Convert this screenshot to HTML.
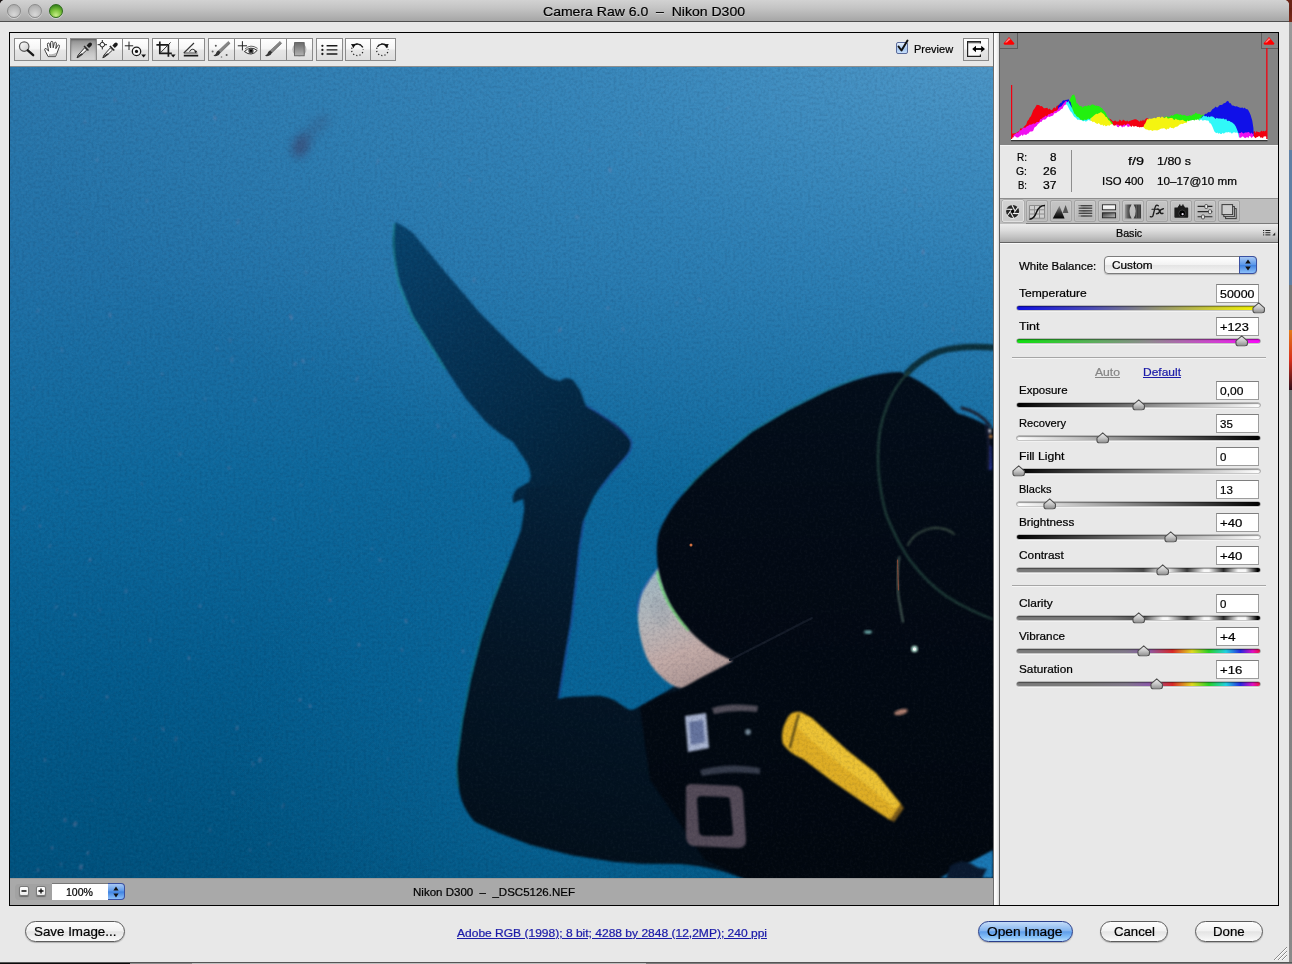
<!DOCTYPE html>
<html>
<head>
<meta charset="utf-8">
<title>Camera Raw 6.0 - Nikon D300</title>
<style>
*{box-sizing:border-box;margin:0;padding:0}
html,body{width:1292px;height:964px;overflow:hidden}
body{background:#6f6f6f;font-family:"Liberation Sans",sans-serif;font-size:11px;color:#000;position:relative}
.abs{position:absolute}
#t_title{text-shadow:0 1px 0 rgba(255,255,255,.45)}
.t{-webkit-text-stroke:.22px currentColor;position:absolute;white-space:pre;display:block;transform-origin:0 50%}
#bgstrip{left:1289px;top:0;width:3px;height:964px;background:linear-gradient(#5a1a10 0,#7a2a18 22px,#9a9a9a 22px,#8c8c8c 150px,#5f7fa3 150px,#5f7fa3 285px,#777 285px,#777 330px,#e07a18 330px,#d8301c 360px,#30101c 390px,#777 390px,#8a8a8a 964px)}
#bgbottom{left:0;top:962px;width:1292px;height:2px;background:linear-gradient(#555 0,#555 1px,transparent 1px),linear-gradient(90deg,#0c0c0c 0,#0c0c0c 130px,#8c8c8c 130px,#8c8c8c 192px,#bdbdbd 192px,#bdbdbd 646px,#7c7c7c 646px,#7c7c7c 100%)}
#win{left:0;top:0;width:1289px;height:962px;background:#e8e8e8;border-radius:5px 5px 0 0;overflow:hidden}
#title{left:0;top:0;width:1289px;height:22px;background:linear-gradient(#d2d2d2 0,#c4c4c4 8px,#a6a6a6 21px,#a0a0a0 100%);border-bottom:1px solid #4f4f4f}
.tl{top:4px;width:14px;height:14px;border-radius:50%;border:1px solid #8c8c8c;background:radial-gradient(circle at 50% 80%,#d8d8d8 0,#bcbcbc 55%,#a2a2a2 100%);box-shadow:0 1px 0 rgba(255,255,255,.45)}
#frame{left:9px;top:32px;width:1270px;height:874px;border:1px solid #000;pointer-events:none}
/*TEXTCSS*/
</style>
</head>
<body>
<div id="bgstrip" class="abs"></div>
<div id="bgbottom" class="abs"></div>
<div class="abs" style="left:0;top:0;width:8px;height:8px;background:#1a1414"></div><div class="abs" style="left:1280px;top:0;width:12px;height:8px;background:#6a2416"></div>
<div id="win" class="abs">
<div id="title" class="abs"></div>
<div class="abs tl" style="left:7px"></div>
<div class="abs tl" style="left:28px"></div>
<div class="abs tl" style="left:49px;border-color:#2f6a1c;background:radial-gradient(circle at 50% 85%,#c8ee88 0,#7cc23c 45%,#3f8a1e 80%,#2c6c14 100%)"></div>
<style>
#tbar{left:10px;top:33px;width:983px;height:33px;background:#e8e8e8}
#tline{left:10px;top:66px;width:983px;height:1px;background:#8e8e8e}
#photo{left:10px;top:67px;width:983px;height:811px;background:#1f6ea6;overflow:hidden}
#status{left:10px;top:878px;width:983px;height:27px;background:#a9a9a9;border-top:1px solid #9a9a9a}
#split{left:993px;top:33px;width:7px;height:872px;background:linear-gradient(90deg,#6e6e6e 0,#6e6e6e 1px,#ffffff 1px,#f4f4f4 4px,#d8d8d8 6px,#5e5e5e 6px,#5e5e5e 7px)}
.tb{position:absolute;top:38px;width:27px;height:23px;border:1px solid #8a8a8a;background:linear-gradient(#ffffff 0,#f6f6f6 45%,#e6e6e6 55%,#dedede 100%)}
.tb.sel{background:linear-gradient(#8a8a8a 0,#a8a8a8 30%,#c8c8c8 70%,#d4d4d4 100%);box-shadow:inset 0 1px 2px rgba(0,0,0,.35)}
</style>
<div id="tbar" class="abs"></div>
<div id="tline" class="abs"></div>
<div class="tb" style="left:14px"></div><div class="tb" style="left:40px"></div>
<div class="tb sel" style="left:70px"></div><div class="tb" style="left:96px"></div><div class="tb" style="left:122px"></div>
<div class="tb" style="left:152px"></div><div class="tb" style="left:178px"></div>
<div class="tb" style="left:208px"></div><div class="tb" style="left:234px"></div><div class="tb" style="left:260px"></div><div class="tb" style="left:286px"></div>
<div class="tb" style="left:316px"></div>
<div class="tb" style="left:345px;width:26px"></div><div class="tb" style="left:370px;width:26px"></div>
<div class="tb" style="left:963px;width:26px"></div>
<svg class="abs" style="left:0;top:33px" width="1000" height="33" viewBox="0 33 1000 33">
<defs>
<linearGradient id="lens" x1="0" y1="0" x2="1" y2="1"><stop offset="0" stop-color="#ffffff"/><stop offset="1" stop-color="#c8c8c8"/></linearGradient>
<linearGradient id="gradf" x1="0" y1="0" x2="0" y2="1"><stop offset="0" stop-color="#6a6a6a"/><stop offset="1" stop-color="#b4b4b4"/></linearGradient>
<linearGradient id="brush" x1="0" y1="0" x2="1" y2="1"><stop offset="0" stop-color="#b0b0b0"/><stop offset="1" stop-color="#5a5a5a"/></linearGradient>
</defs>
<!-- 1 zoom -->
<circle cx="24.2" cy="46.6" r="4.7" fill="url(#lens)" stroke="#5a5a5a" stroke-width="1.2"/>
<path d="M27.8 50.3 L33.2 55.2" stroke="#1a1a1a" stroke-width="2.3" stroke-linecap="round"/>
<!-- 2 hand -->
<path d="M48.2 56.6 L45.3 51.2 Q44 49 45.2 48.5 Q46.4 48.2 47.6 50 L48.6 51.2 L47.4 44.6 Q47.2 43.2 48.2 43 Q49.2 42.9 49.6 44.2 L50.6 48 L50.6 42.6 Q50.7 41.4 51.8 41.4 Q52.8 41.4 52.9 42.6 L53.2 47.8 L54.3 43.2 Q54.6 42.1 55.6 42.3 Q56.5 42.6 56.4 43.8 L55.8 48.6 L57.6 45.6 Q58.3 44.7 59.1 45.1 Q59.8 45.6 59.4 46.7 L57.4 52 Q56.6 54.6 55.4 56.6 Z" fill="#fcfcfc" stroke="#3c3c3c" stroke-width="1" stroke-linejoin="round"/>
<path d="M49 56.2 L55 56.2 L56.6 52.6 Q53 55 49 54 Z" fill="#b8b8b8"/>
<!-- 3 eyedropper (selected) -->
<g id="eyed">
<path d="M86.6 45.4 L88.9 43 Q90.2 41.8 91.5 43.1 Q92.6 44.4 91.4 45.7 L89 48 Z" fill="#1c1c1c"/>
<path d="M84.6 45.6 L89 50 L87.9 51 L83.5 46.6 Z" fill="#2a2a2a"/>
<path d="M84.6 47.8 L86.8 50 L79.6 56.6 L77 57.8 L78.2 55 Z" fill="#f4f4f4" stroke="#222" stroke-width=".9" stroke-linejoin="round"/>
<path d="M81.6 53.2 L83 54.4 L79.4 56.6 L77.4 57.4 L78.4 55.6 Z" fill="#333"/>
</g>
<!-- 4 color sampler -->
<use href="#eyed" x="25.8" y="0"/>
<circle cx="102.3" cy="44.7" r="2.3" fill="none" stroke="#222" stroke-width="1"/>
<path d="M102.3 40 V42.6 M102.3 46.8 V49.4 M97.6 44.7 H100.2 M104.4 44.7 H107" stroke="#222" stroke-width="1"/>
<!-- 5 targeted adjustment -->
<path d="M129 41.6 V50 M124.8 45.8 H133.2" stroke="#222" stroke-width="1"/>
<circle cx="136.5" cy="51.4" r="4.2" fill="#f8f8f8" stroke="#1c1c1c" stroke-width="1.3"/>
<circle cx="136.5" cy="51.4" r="1.6" fill="#111"/>
<path d="M141.2 54.6 L146 54.6 L143.6 57.4 Z" fill="#111"/>
<!-- 6 crop -->
<path d="M159.8 41.4 V53.4 H171.8 M156.4 44.8 H168.4 V56.8" stroke="#1a1a1a" stroke-width="1.7" fill="none"/>
<path d="M160.6 52.6 L170.6 42.4" stroke="#333" stroke-width="1"/>
<path d="M170.8 54.6 L175.6 54.6 L173.2 57.4 Z" fill="#111"/>
<!-- 7 straighten -->
<path d="M183.8 55.6 H198.2" stroke="#1a1a1a" stroke-width="1.6"/>
<path d="M183.8 53 H197.4" stroke="#444" stroke-width="1"/>
<path d="M183.8 53 L194 43" stroke="#333" stroke-width="1.1"/>
<path d="M189.6 51.8 Q190.4 49.2 192.8 49.2 Q195 49.4 195.6 51.4" stroke="#333" stroke-width="1" fill="none"/>
<path d="M194 50.6 L197.2 51 L195.6 53.2 Z" fill="#222"/>
<!-- 8 spot removal -->
<g id="brsh">
<path d="M228.4 41.4 L230 43.4 L220.6 52.6 L218.6 50.6 Z" fill="url(#brush)" stroke="#555" stroke-width=".5"/>
<path d="M218.6 50.6 L220.6 52.6 Q219.6 55.2 216.6 56 Q214.4 56.4 213.4 55.8 Q216.2 54.6 216.6 52 Q217.4 51 218.6 50.6 Z" fill="#333"/>
</g>
<circle cx="215.8" cy="45.8" r="1" fill="#555"/><circle cx="212.6" cy="51.4" r="1" fill="#666"/><circle cx="226.6" cy="55" r="1" fill="#555"/><circle cx="221.5" cy="57" r=".8" fill="#777"/>
<!-- 9 red eye -->
<path d="M242.4 41.2 V50.4 M237.8 45.8 H247" stroke="#222" stroke-width="1"/>
<path d="M244.4 51.6 Q250.6 45.4 257.2 50.4 Q251.6 57 244.4 51.6 Z" fill="#f4f4f4" stroke="#333" stroke-width="1"/>
<circle cx="251" cy="50.8" r="2.6" fill="#444"/><circle cx="251" cy="50.8" r="1.1" fill="#000"/>
<path d="M245 49 Q250.6 43.6 257.6 48.4" stroke="#555" stroke-width=".9" fill="none"/>
<!-- 10 adjustment brush -->
<use href="#brsh" x="51.6" y="0"/>
<!-- 11 graduated filter -->
<circle cx="299.4" cy="49.3" r="6.6" fill="#c9c9c9" stroke="#9a9a9a" stroke-width=".6"/>
<rect x="294.6" y="42.6" width="9.6" height="13.2" fill="url(#gradf)" stroke="#555" stroke-width=".8"/>
<!-- 12 prefs list -->
<path d="M326.6 45.8 H337.4 M326.6 49.9 H337.4 M326.6 54 H337.4" stroke="#1a1a1a" stroke-width="1.4"/>
<circle cx="322.4" cy="45.8" r="1.15" fill="#1a1a1a"/><circle cx="322.4" cy="49.9" r="1.15" fill="#1a1a1a"/><circle cx="322.4" cy="54" r="1.15" fill="#1a1a1a"/>
<!-- 13 rotate ccw -->
<circle cx="357.4" cy="49.8" r="5.8" fill="none" stroke="#222" stroke-width="1.25" stroke-dasharray="1.2 2.1" stroke-dashoffset="1"/>
<path d="M362.4 46.9 A5.8 5.8 0 0 0 353.2 45.8" stroke="#1a1a1a" stroke-width="1.3" fill="none"/>
<path d="M351 44 L355.6 44.2 L353.4 48.2 Z" fill="#111"/>
<!-- 14 rotate cw -->
<circle cx="382.4" cy="49.8" r="5.8" fill="none" stroke="#222" stroke-width="1.25" stroke-dasharray="1.2 2.1" stroke-dashoffset="1"/>
<path d="M377.4 46.9 A5.8 5.8 0 0 1 386.6 45.8" stroke="#1a1a1a" stroke-width="1.3" fill="none"/>
<path d="M388.8 44 L384.2 44.2 L386.4 48.2 Z" fill="#111"/>
<!-- toggle fullscreen -->
<path d="M980.4 43.4 V41.6 H967.6 V56.4 H980.4 V54.4" stroke="#222" stroke-width="1.2" fill="#fafafa"/>
<path d="M968 42.6 H980" stroke="#666" stroke-width="1.4"/>
<path d="M974.6 49 H982.6" stroke="#000" stroke-width="1.8"/>
<path d="M972.2 49 L976 45.8 V52.2 Z M985 49 L981.2 45.8 V52.2 Z" fill="#000"/>
</svg>

<div id="photo" class="abs">
<svg class="abs" style="left:0;top:0" width="983" height="811" viewBox="10 67 983 811">
<defs>
<linearGradient id="wv" x1="0" y1="67" x2="0" y2="878" gradientUnits="userSpaceOnUse">
<stop offset="0" stop-color="#2c79ad"/><stop offset=".25" stop-color="#2172a8"/><stop offset=".5" stop-color="#0e699d"/><stop offset=".75" stop-color="#045e90"/><stop offset="1" stop-color="#005480"/>
</linearGradient>
<radialGradient id="wr" cx="0" cy="0" r="1" gradientUnits="userSpaceOnUse" gradientTransform="translate(1000 40) scale(1000 480)">
<stop offset="0" stop-color="#6cb2de" stop-opacity=".56"/><stop offset=".5" stop-color="#50a8dc" stop-opacity=".25"/><stop offset="1" stop-color="#50a8dc" stop-opacity="0"/>
</radialGradient>
<radialGradient id="wl" cx="60" cy="920" r="420" gradientUnits="userSpaceOnUse">
<stop offset="0" stop-color="#004a74" stop-opacity=".2"/><stop offset="1" stop-color="#004a74" stop-opacity="0"/>
</radialGradient>
<radialGradient id="wm" cx="560" cy="780" r="330" gradientUnits="userSpaceOnUse">
<stop offset="0" stop-color="#1478b0" stop-opacity=".35"/><stop offset="1" stop-color="#1478b0" stop-opacity="0"/>
</radialGradient>
<linearGradient id="fing" x1="395" y1="222" x2="600" y2="480" gradientUnits="userSpaceOnUse">
<stop offset="0" stop-color="#08446e"/><stop offset=".4" stop-color="#063558"/><stop offset=".85" stop-color="#042640"/><stop offset="1" stop-color="#042138"/>
</linearGradient>
<linearGradient id="legg" x1="600" y1="460" x2="520" y2="860" gradientUnits="userSpaceOnUse">
<stop offset="0" stop-color="#04253e"/><stop offset=".2" stop-color="#041e34"/><stop offset=".5" stop-color="#041626"/><stop offset="1" stop-color="#030f1a"/>
</linearGradient>
<linearGradient id="bodyg" x1="0" y1="372" x2="0" y2="880" gradientUnits="userSpaceOnUse"><stop offset="0" stop-color="#030e1a"/><stop offset=".4" stop-color="#030a14"/><stop offset="1" stop-color="#02080f"/></linearGradient>
<linearGradient id="bagg" x1="652" y1="572" x2="695" y2="688" gradientUnits="userSpaceOnUse"><stop offset="0" stop-color="#9fb8c2"/><stop offset=".35" stop-color="#b4b7bb"/><stop offset=".7" stop-color="#c3aba7"/><stop offset="1" stop-color="#aa9492"/></linearGradient>
<filter id="b1" x="-5%" y="-5%" width="110%" height="110%" color-interpolation-filters="sRGB"><feGaussianBlur stdDeviation="1.3"/></filter>
<filter id="b2" x="-20%" y="-20%" width="140%" height="140%" color-interpolation-filters="sRGB"><feGaussianBlur stdDeviation="0.8"/></filter>
<filter id="b6" filterUnits="userSpaceOnUse" x="250" y="80" width="120" height="120" color-interpolation-filters="sRGB"><feGaussianBlur stdDeviation="5"/></filter>
<filter id="grain" x="0" y="0" width="100%" height="100%" color-interpolation-filters="sRGB"><feTurbulence type="fractalNoise" baseFrequency="0.38" numOctaves="2" seed="3" result="n"/><feColorMatrix type="matrix" values="0 0 0 0 1  0 0 0 0 1  0 0 0 0 1  .9 0 0 0 -.36"/></filter>
<filter id="grain2" x="0" y="0" width="100%" height="100%" color-interpolation-filters="sRGB"><feTurbulence type="fractalNoise" baseFrequency="0.36" numOctaves="2" seed="11" result="n"/><feColorMatrix type="matrix" values="0 0 0 0 0  0 0 0 0 0  0 0 0 0 0.1  .9 0 0 0 -.36"/></filter>
</defs>
<rect x="10" y="67" width="983" height="811" fill="url(#wv)"/>
<rect x="10" y="67" width="983" height="811" fill="url(#wr)"/>
<rect x="10" y="67" width="983" height="811" fill="url(#wl)"/>
<rect x="10" y="67" width="983" height="811" fill="url(#wm)"/>
<path d="M298 150 Q304 136 324 120" stroke="#3a4f78" stroke-width="12" stroke-linecap="round" fill="none" filter="url(#b6)" opacity=".3"/>
<ellipse cx="301" cy="146" rx="8" ry="12" transform="rotate(20 301 146)" fill="#3c3e68" filter="url(#b6)" opacity=".5"/>
<g filter="url(#b2)"><ellipse cx="24" cy="508" rx="1.2" ry="2.9" transform="rotate(25 24 508)" fill="#a98cb4" opacity="0.28"/><ellipse cx="126" cy="591" rx="1.7" ry="2.3" transform="rotate(10 126 591)" fill="#a98cb4" opacity="0.22"/><ellipse cx="222" cy="534" rx="1.2" ry="1.4" transform="rotate(-10 222 534)" fill="#a98cb4" opacity="0.22"/><ellipse cx="107" cy="697" rx="1.2" ry="1.9" transform="rotate(-20 107 697)" fill="#a98cb4" opacity="0.36"/><ellipse cx="135" cy="739" rx="1.2" ry="2.3" transform="rotate(0 135 739)" fill="#a98cb4" opacity="0.18"/><ellipse cx="176" cy="739" rx="1.2" ry="2.9" transform="rotate(25 176 739)" fill="#a98cb4" opacity="0.28"/><ellipse cx="41" cy="697" rx="1.3" ry="1.9" transform="rotate(25 41 697)" fill="#a98cb4" opacity="0.18"/><ellipse cx="81" cy="867" rx="1.7" ry="2.9" transform="rotate(10 81 867)" fill="#a98cb4" opacity="0.36"/><ellipse cx="359" cy="645" rx="1.7" ry="1.4" transform="rotate(10 359 645)" fill="#a98cb4" opacity="0.36"/><ellipse cx="226" cy="617" rx="1.0" ry="1.9" transform="rotate(-20 226 617)" fill="#a98cb4" opacity="0.22"/><ellipse cx="233" cy="793" rx="1.7" ry="1.9" transform="rotate(-20 233 793)" fill="#a98cb4" opacity="0.28"/><ellipse cx="57" cy="490" rx="1.0" ry="1.4" transform="rotate(-20 57 490)" fill="#a98cb4" opacity="0.22"/><ellipse cx="100" cy="610" rx="1.0" ry="2.3" transform="rotate(25 100 610)" fill="#a98cb4" opacity="0.18"/><ellipse cx="150" cy="640" rx="1.0" ry="1.9" transform="rotate(25 150 640)" fill="#a98cb4" opacity="0.36"/><ellipse cx="45" cy="760" rx="1.2" ry="2.3" transform="rotate(0 45 760)" fill="#a98cb4" opacity="0.28"/><ellipse cx="300" cy="700" rx="1.7" ry="1.4" transform="rotate(-20 300 700)" fill="#a98cb4" opacity="0.36"/><ellipse cx="260" cy="760" rx="1.7" ry="2.9" transform="rotate(10 260 760)" fill="#a98cb4" opacity="0.28"/><ellipse cx="250" cy="850" rx="1.0" ry="1.9" transform="rotate(-20 250 850)" fill="#a98cb4" opacity="0.28"/><ellipse cx="210" cy="830" rx="1.3" ry="2.9" transform="rotate(-10 210 830)" fill="#a98cb4" opacity="0.18"/><ellipse cx="150" cy="800" rx="1.2" ry="2.3" transform="rotate(-10 150 800)" fill="#a98cb4" opacity="0.18"/><ellipse cx="420" cy="700" rx="1.3" ry="1.4" transform="rotate(0 420 700)" fill="#a98cb4" opacity="0.28"/><ellipse cx="380" cy="560" rx="1.2" ry="2.3" transform="rotate(-10 380 560)" fill="#a98cb4" opacity="0.28"/><ellipse cx="330" cy="600" rx="1.2" ry="1.9" transform="rotate(-10 330 600)" fill="#a98cb4" opacity="0.36"/><ellipse cx="90" cy="560" rx="1.2" ry="1.9" transform="rotate(25 90 560)" fill="#a98cb4" opacity="0.36"/><ellipse cx="180" cy="520" rx="1.3" ry="1.4" transform="rotate(-20 180 520)" fill="#a98cb4" opacity="0.28"/><ellipse cx="65" cy="820" rx="1.7" ry="2.3" transform="rotate(-10 65 820)" fill="#a98cb4" opacity="0.28"/><ellipse cx="115" cy="100" rx="1.7" ry="2.3" transform="rotate(0 115 100)" fill="#a98cb4" opacity="0.18"/><ellipse cx="165" cy="112" rx="1.2" ry="1.4" transform="rotate(-10 165 112)" fill="#a98cb4" opacity="0.36"/><ellipse cx="215" cy="118" rx="1.2" ry="2.3" transform="rotate(-10 215 118)" fill="#a98cb4" opacity="0.36"/><ellipse cx="440" cy="185" rx="1.0" ry="2.9" transform="rotate(0 440 185)" fill="#a98cb4" opacity="0.18"/><ellipse cx="110" cy="315" rx="1.0" ry="2.9" transform="rotate(-10 110 315)" fill="#a98cb4" opacity="0.36"/><ellipse cx="62" cy="350" rx="1.2" ry="2.9" transform="rotate(0 62 350)" fill="#a98cb4" opacity="0.18"/><ellipse cx="255" cy="400" rx="1.7" ry="2.9" transform="rotate(10 255 400)" fill="#a98cb4" opacity="0.18"/><ellipse cx="590" cy="150" rx="1.2" ry="1.9" transform="rotate(-10 590 150)" fill="#a98cb4" opacity="0.18"/><ellipse cx="610" cy="170" rx="1.2" ry="2.9" transform="rotate(-10 610 170)" fill="#a98cb4" opacity="0.36"/><ellipse cx="905" cy="190" rx="1.3" ry="1.9" transform="rotate(25 905 190)" fill="#a98cb4" opacity="0.22"/><ellipse cx="920" cy="205" rx="1.0" ry="1.4" transform="rotate(-20 920 205)" fill="#a98cb4" opacity="0.22"/><ellipse cx="925" cy="305" rx="1.7" ry="1.9" transform="rotate(-10 925 305)" fill="#a98cb4" opacity="0.18"/><ellipse cx="700" cy="300" rx="1.3" ry="1.9" transform="rotate(0 700 300)" fill="#a98cb4" opacity="0.22"/><ellipse cx="560" cy="330" rx="1.3" ry="2.3" transform="rotate(25 560 330)" fill="#a98cb4" opacity="0.36"/><ellipse cx="470" cy="180" rx="1.2" ry="1.4" transform="rotate(0 470 180)" fill="#a98cb4" opacity="0.36"/><ellipse cx="180" cy="454" rx="1.7" ry="1.9" transform="rotate(25 180 454)" fill="#a98cb4" opacity="0.22"/><ellipse cx="217" cy="349" rx="1.0" ry="2.9" transform="rotate(-10 217 349)" fill="#a98cb4" opacity="0.18"/><ellipse cx="52" cy="848" rx="1.2" ry="1.9" transform="rotate(-10 52 848)" fill="#a98cb4" opacity="0.36"/><ellipse cx="63" cy="674" rx="1.0" ry="1.4" transform="rotate(0 63 674)" fill="#a98cb4" opacity="0.36"/><ellipse cx="313" cy="359" rx="1.0" ry="1.4" transform="rotate(-10 313 359)" fill="#a98cb4" opacity="0.22"/><ellipse cx="274" cy="519" rx="1.3" ry="1.4" transform="rotate(-20 274 519)" fill="#a98cb4" opacity="0.36"/><ellipse cx="34" cy="388" rx="1.0" ry="1.4" transform="rotate(10 34 388)" fill="#a98cb4" opacity="0.28"/><ellipse cx="237" cy="728" rx="1.2" ry="2.3" transform="rotate(10 237 728)" fill="#a98cb4" opacity="0.36"/><ellipse cx="50" cy="546" rx="1.2" ry="2.3" transform="rotate(25 50 546)" fill="#a98cb4" opacity="0.22"/><ellipse cx="61" cy="864" rx="1.7" ry="1.9" transform="rotate(10 61 864)" fill="#a98cb4" opacity="0.18"/><ellipse cx="232" cy="360" rx="1.7" ry="2.9" transform="rotate(0 232 360)" fill="#a98cb4" opacity="0.18"/><ellipse cx="438" cy="426" rx="1.2" ry="2.9" transform="rotate(-20 438 426)" fill="#a98cb4" opacity="0.22"/><ellipse cx="129" cy="363" rx="1.3" ry="1.4" transform="rotate(-10 129 363)" fill="#a98cb4" opacity="0.28"/><ellipse cx="310" cy="706" rx="1.2" ry="2.3" transform="rotate(-10 310 706)" fill="#a98cb4" opacity="0.36"/><ellipse cx="40" cy="526" rx="1.2" ry="1.4" transform="rotate(10 40 526)" fill="#a98cb4" opacity="0.36"/><ellipse cx="38" cy="870" rx="1.2" ry="1.9" transform="rotate(-10 38 870)" fill="#a98cb4" opacity="0.36"/><ellipse cx="454" cy="436" rx="1.7" ry="2.3" transform="rotate(10 454 436)" fill="#a98cb4" opacity="0.22"/><ellipse cx="163" cy="729" rx="1.3" ry="2.3" transform="rotate(-20 163 729)" fill="#a98cb4" opacity="0.28"/><ellipse cx="88" cy="853" rx="1.0" ry="2.3" transform="rotate(25 88 853)" fill="#a98cb4" opacity="0.36"/><ellipse cx="75" cy="615" rx="1.7" ry="1.4" transform="rotate(10 75 615)" fill="#a98cb4" opacity="0.28"/><ellipse cx="301" cy="485" rx="1.3" ry="1.4" transform="rotate(-20 301 485)" fill="#a98cb4" opacity="0.22"/><ellipse cx="67" cy="492" rx="1.0" ry="1.4" transform="rotate(0 67 492)" fill="#a98cb4" opacity="0.28"/><ellipse cx="205" cy="399" rx="1.0" ry="1.9" transform="rotate(0 205 399)" fill="#a98cb4" opacity="0.22"/><ellipse cx="295" cy="364" rx="1.7" ry="2.3" transform="rotate(10 295 364)" fill="#a98cb4" opacity="0.22"/><ellipse cx="303" cy="361" rx="1.7" ry="2.3" transform="rotate(-20 303 361)" fill="#a98cb4" opacity="0.28"/><ellipse cx="331" cy="510" rx="1.0" ry="1.9" transform="rotate(10 331 510)" fill="#a98cb4" opacity="0.18"/><ellipse cx="269" cy="844" rx="1.3" ry="1.4" transform="rotate(-20 269 844)" fill="#a98cb4" opacity="0.28"/><ellipse cx="233" cy="621" rx="1.0" ry="1.9" transform="rotate(-20 233 621)" fill="#a98cb4" opacity="0.28"/><ellipse cx="253" cy="764" rx="1.0" ry="2.9" transform="rotate(-20 253 764)" fill="#a98cb4" opacity="0.28"/><ellipse cx="200" cy="606" rx="1.7" ry="2.3" transform="rotate(25 200 606)" fill="#a98cb4" opacity="0.22"/><ellipse cx="142" cy="484" rx="1.0" ry="1.9" transform="rotate(-20 142 484)" fill="#a98cb4" opacity="0.22"/><ellipse cx="372" cy="549" rx="1.3" ry="1.4" transform="rotate(-10 372 549)" fill="#a98cb4" opacity="0.22"/><ellipse cx="56" cy="607" rx="1.3" ry="2.3" transform="rotate(25 56 607)" fill="#a98cb4" opacity="0.22"/><ellipse cx="283" cy="806" rx="1.3" ry="2.9" transform="rotate(25 283 806)" fill="#a98cb4" opacity="0.22"/><ellipse cx="463" cy="651" rx="1.3" ry="2.3" transform="rotate(-20 463 651)" fill="#a98cb4" opacity="0.28"/><ellipse cx="388" cy="759" rx="1.0" ry="1.4" transform="rotate(-20 388 759)" fill="#a98cb4" opacity="0.22"/><ellipse cx="162" cy="374" rx="1.7" ry="1.9" transform="rotate(10 162 374)" fill="#a98cb4" opacity="0.18"/><ellipse cx="75" cy="824" rx="1.7" ry="2.9" transform="rotate(25 75 824)" fill="#a98cb4" opacity="0.36"/><ellipse cx="229" cy="468" rx="1.3" ry="1.9" transform="rotate(-10 229 468)" fill="#a98cb4" opacity="0.28"/><ellipse cx="402" cy="650" rx="1.2" ry="1.9" transform="rotate(10 402 650)" fill="#a98cb4" opacity="0.28"/><ellipse cx="92" cy="800" rx="1.0" ry="1.9" transform="rotate(-20 92 800)" fill="#a98cb4" opacity="0.18"/><ellipse cx="230" cy="340" rx="1.3" ry="2.9" transform="rotate(-10 230 340)" fill="#a98cb4" opacity="0.18"/><ellipse cx="357" cy="379" rx="1.0" ry="2.9" transform="rotate(25 357 379)" fill="#a98cb4" opacity="0.28"/><ellipse cx="406" cy="621" rx="1.2" ry="2.3" transform="rotate(-20 406 621)" fill="#a98cb4" opacity="0.36"/><ellipse cx="189" cy="658" rx="1.2" ry="1.9" transform="rotate(0 189 658)" fill="#a98cb4" opacity="0.36"/><ellipse cx="623" cy="329" rx="1.0" ry="2.3" transform="rotate(0 623 329)" fill="#a98cb4" opacity="0.28"/><ellipse cx="608" cy="308" rx="1.3" ry="1.9" transform="rotate(-20 608 308)" fill="#a98cb4" opacity="0.28"/><ellipse cx="85" cy="122" rx="1.2" ry="2.3" transform="rotate(-10 85 122)" fill="#a98cb4" opacity="0.18"/><ellipse cx="291" cy="317" rx="1.3" ry="2.9" transform="rotate(-20 291 317)" fill="#a98cb4" opacity="0.36"/><ellipse cx="728" cy="108" rx="1.3" ry="1.9" transform="rotate(-10 728 108)" fill="#a98cb4" opacity="0.18"/><ellipse cx="77" cy="233" rx="1.0" ry="2.3" transform="rotate(-20 77 233)" fill="#a98cb4" opacity="0.22"/><ellipse cx="677" cy="303" rx="1.7" ry="1.4" transform="rotate(10 677 303)" fill="#a98cb4" opacity="0.18"/><ellipse cx="306" cy="272" rx="1.3" ry="2.3" transform="rotate(-10 306 272)" fill="#a98cb4" opacity="0.18"/><ellipse cx="923" cy="252" rx="1.2" ry="2.9" transform="rotate(0 923 252)" fill="#a98cb4" opacity="0.36"/><ellipse cx="38" cy="311" rx="1.2" ry="2.3" transform="rotate(25 38 311)" fill="#a98cb4" opacity="0.22"/><ellipse cx="378" cy="161" rx="1.0" ry="2.9" transform="rotate(25 378 161)" fill="#a98cb4" opacity="0.22"/><ellipse cx="640" cy="134" rx="1.0" ry="1.9" transform="rotate(-20 640 134)" fill="#a98cb4" opacity="0.18"/><ellipse cx="520" cy="105" rx="1.0" ry="1.9" transform="rotate(0 520 105)" fill="#a98cb4" opacity="0.18"/><ellipse cx="238" cy="222" rx="1.7" ry="2.9" transform="rotate(25 238 222)" fill="#a98cb4" opacity="0.18"/><ellipse cx="147" cy="201" rx="1.0" ry="1.9" transform="rotate(10 147 201)" fill="#a98cb4" opacity="0.28"/><ellipse cx="422" cy="275" rx="1.0" ry="2.9" transform="rotate(-20 422 275)" fill="#a98cb4" opacity="0.18"/><ellipse cx="953" cy="329" rx="1.0" ry="2.9" transform="rotate(0 953 329)" fill="#a98cb4" opacity="0.18"/><ellipse cx="97" cy="160" rx="1.3" ry="1.9" transform="rotate(-10 97 160)" fill="#a98cb4" opacity="0.22"/><ellipse cx="474" cy="280" rx="1.7" ry="2.9" transform="rotate(10 474 280)" fill="#a98cb4" opacity="0.18"/><ellipse cx="577" cy="217" rx="1.7" ry="2.3" transform="rotate(-20 577 217)" fill="#a98cb4" opacity="0.22"/></g>
<g filter="url(#b1)">
<path fill="url(#fing)" d="M395 222 Q403 225 413 233 L446 273 L480 313 L513 346 L546 376 Q553 380 560 381 Q566 376 573 380 L580 390 L586 406 Q600 414 612 422 Q624 430 630 440 Q633 447 626 456 L612 472 L599 489 L593 498 L583 521 L560 540 L526 520 L523 499 L513 503 Q512 494 517 489 L529 482 Q533 476 527 463 L513 442 Q498 433 486 422 L466 399 L446 369 L430 343 L413 316 L400 283 Q393 255 393 240 Z"/>
<path fill="url(#legg)" d="M527 488 L606 478 L593.5 496.6 L583 521.5 L579 546 L575 584 L570.7 621 L564.5 658 L558 699 Q568 696 577 696.6 L597.7 695.8 Q607 696.5 614 700 L624.6 707 Q628 710 631 710 Q636 709 640 706 L662 694 L700 670 L760 700 L780 890 L753 882 L725 872 Q700 865 679 864 L640 863.8 L614 861.7 L572.8 855.5 L531 845 L498 832.7 L479.4 824 L475 822 Q468 814 465 808 Q460 798 458.7 787 Q456.5 775 457.4 762 L462.8 720.7 L471 679 L481.5 637.7 L494 600 L508.5 563 L521 530 L525 505 Z"/>
</g>
<g filter="url(#b2)"><path d="M660 566 Q649 579 643 591 Q637 605 638 620 Q639.5 640 646 656 Q651 667 659 674.5 Q670 686.5 682 688.5 Q695 687 708 678 L731 664.5 L738 658 L700 636 L672 598 Z" fill="url(#bagg)"/>
<ellipse cx="660" cy="612" rx="9" ry="16" transform="rotate(-18 660 612)" fill="#6c7a88" opacity=".12"/></g>
<g filter="url(#b1)">
<path fill="url(#bodyg)" d="M901 372 C880 371 850 381 827 391 L789 410 L752 432 L715 462 Q698 476 685 492 Q672 506 666 518 Q658 530 657 544 Q656 560 659 574 Q663 590 670 604 Q678 618 689 630 Q700 642 715 652 L733 661 L700 678 L679 690 L660 696 L640 708 L650 780 L705 860 L753 881 L1000 881 L1000 428 L991 428 Q975 418 957 413 L939 395 Q920 380 901 372 Z"/>

</g>
<g fill="none" stroke-linecap="round">
<path d="M994 347.5 Q960 345 939 351.5 Q921 358 907 373" stroke="#0b303c" stroke-width="6.2" filter="url(#b2)"/>
<path d="M909 372 Q888 392 880 430 Q874 470 886 514 Q896 540 909 559 Q926 582 946 596 Q968 610 992 619" stroke="#1f3d38" stroke-width="2.4" filter="url(#b2)"/>
<path d="M908 545 Q914 532 932 528 Q946 527 954 534" stroke="#34463f" stroke-width="2" filter="url(#b2)"/>
<path d="M899 557 Q896 580 899 600 L903 622" stroke="#5a7468" stroke-width="1.5" filter="url(#b2)"/>
<path d="M897.6 560 L898.4 590" stroke="#c0583a" stroke-width=".9" opacity=".8"/>
<path d="M730 660 L812 618" stroke="#131a26" stroke-width="2"/>
<path d="M962 408 Q980 412 990 426" stroke="#1a1f30" stroke-width="3" filter="url(#b2)"/>
</g>
<g filter="url(#b2)">
<path d="M786 721 Q790 710 801 712 L812 718 L847 750 L876 773 L901 804 Q899 814 890 820 L861 801 L832 781 L803 759 Q790 754 783 744 Q780 732 786 721 Z" fill="#dfae24"/>
<path d="M800 714 L812 719 L847 751 L876 774 L899 803 L895 809 L868 786 L838 763 L806 736 L795 724 Z" fill="#f0c838" opacity=".8"/>
<path d="M890 820 L901 804 L904 808 L894 822 Z" fill="#7a5a18"/>
<path d="M799 714 Q794 730 790 748" stroke="#3a3010" stroke-width="1.8" fill="none"/>
</g>
<g filter="url(#b2)">
<path d="M685 716 L706 713 L709 748 L688 752 Z" fill="#a6b2ce"/>
<path d="M689 722 L703 720 L705 742 L691 745 Z" fill="#4a5a8a" opacity=".7"/>
<path d="M712 708 Q730 702 758 706 L757 712 Q735 709 714 714 Z" fill="#5a5560" opacity=".9"/>
<path d="M700 770 Q730 762 760 768 L760 774 Q730 770 702 776 Z" fill="#3a4050" opacity=".9"/>
<circle cx="748" cy="732" r="3" fill="#8aa0b0" opacity=".8"/>
<path d="M686 788 Q686 784 692 784 L736 786 Q742 787 743 793 L746 840 Q746 848 738 848 L694 846 Q687 845 686 838 Z M697 799 L699 832 Q700 836 705 836 L730 836 Q734 836 733 831 L730 800 Q730 797 726 797 L702 796 Q697 796 697 799 Z" fill="#544b58" fill-rule="evenodd"/>
</g>
<g fill="none" filter="url(#b2)" stroke-linecap="round">
<path d="M394.5 224 Q391.5 246 398.5 283 L412 316 L429 343 L445 369" stroke="#18a07c" stroke-width="1.3" opacity=".55"/>
<path d="M657 571 Q661 590 669 604 Q677 618 688 630" stroke="#58f05c" stroke-width="1.7" opacity=".8"/>
<path d="M507.5 563 L493 600 L480.5 638 L470 679 L462 721 L456.5 762 L458 787" stroke="#1a9070" stroke-width="1.2" opacity=".5"/>
<path d="M684 491.5 Q710 464 751.5 431 L788.5 409 L826.5 390 L864 375" stroke="#1a9070" stroke-width="1.1" opacity=".45"/>
<path d="M584 521 L580 546 L576 584 L571.7 621 L565.5 658 L559 697" stroke="#3a30b0" stroke-width="1.3" opacity=".5"/>
<path d="M587 406 Q612 421 630.5 439 Q634 447 627 456 L613 472 L600 489" stroke="#3a3ab8" stroke-width="1.2" opacity=".5"/>
<path d="M638 613 Q637 600 643 590 Q649 579 658 569" stroke="#5a50d0" stroke-width="1.3" opacity=".45"/>
</g>
<circle cx="914.5" cy="649" r="3.2" fill="#b8e8d8" filter="url(#b2)"/>
<circle cx="914.5" cy="649" r="1.6" fill="#ffffff"/>
<ellipse cx="901" cy="712" rx="7" ry="2.8" transform="rotate(-15 901 712)" fill="#b08070" filter="url(#b2)"/>
<ellipse cx="868" cy="632" rx="4" ry="1.8" fill="#6aa8a8" filter="url(#b2)"/>
<circle cx="691" cy="545" r="1.5" fill="#d07040"/>
<path d="M940 878 L993 850 L993 878 Z" fill="#1a78b4" filter="url(#b2)"/>
<path d="M950 866 Q962 858 972 864 Q980 870 987 868 L982 879 L946 879 Z" fill="#0a1a30" filter="url(#b2)"/>
<g filter="url(#b2)"><circle cx="989" cy="431" r="2.2" fill="#e8e8f0"/><circle cx="990.5" cy="436.5" r="1.8" fill="#e09040"/><path d="M990 446 L990.5 470" stroke="#2a3cc0" stroke-width="2.2"/><path d="M986 424 Q990 440 988 470" stroke="#141a30" stroke-width="3" fill="none"/></g>
<rect x="10" y="67" width="983" height="811" filter="url(#grain)" opacity=".075"/>
<rect x="10" y="67" width="983" height="811" filter="url(#grain2)" opacity=".26"/>
</svg>
</div>
<div id="status" class="abs"></div>
<div id="split" class="abs"></div>
<!--STATUSCTL-->

<style>
#hist{left:1000px;top:33px;width:279px;height:112px;background:#848484}
.clip{top:33px;width:18px;height:16px;border:1px solid #5e5e5e;border-top:none;background:#848484}
#info{left:1000px;top:145px;width:279px;height:53px;background:#e8e8e8;border-top:1px solid #f4f4f4}
.it{position:absolute;font-size:11px;line-height:13px;white-space:pre}
#tabs{left:1000px;top:198px;width:279px;height:26px;background:#bebebe;border-top:1px solid #8e8e8e}
.tab{position:absolute;top:200px;width:22px;height:22px;border:1px solid #a4a4a4;border-radius:2px;background:linear-gradient(#c6c6c6,#b6b6b6);box-shadow:inset 0 0 0 1px rgba(255,255,255,.12)}
.tab.sel{background:linear-gradient(#d2d2d2,#cacaca);border-color:#e0e0e0;box-shadow:0 0 0 .5px #9a9a9a}
#tabline{left:1026px;top:223px;width:253px;height:1px;background:#7a7a7a}
#phead{left:1000px;top:224px;width:279px;height:19px;background:linear-gradient(#ececec 0,#dcdcdc 35%,#c4c4c4 70%,#acacac 100%);border-bottom:1px solid #646464}
#pbody{left:1000px;top:243px;width:279px;height:662px;background:#e8e8e8;border-top:1px solid #fafafa}
.lbl{position:absolute;left:1019px;font-size:11px;line-height:13px;white-space:pre}
.val{position:absolute;left:1216px;width:43px;height:19px;border:1px solid #9c9c9c;border-top-color:#7e7e7e;background:#fff;font-size:11px;line-height:17px;padding-left:4px;white-space:pre}
.trk{position:absolute;left:1017px;width:243px;height:4px;border-radius:2px;box-shadow:inset 0 1px 1px rgba(0,0,0,.4),0 0 0 .6px rgba(60,60,60,.55),0 1.5px 0 rgba(255,255,255,.85)}
.sep{position:absolute;left:1012px;width:254px;height:2px;background:#a6a6a6;border-bottom:1px solid #f6f6f6}
.th{position:absolute;width:11px;height:11px}
#wbsel{left:1104px;top:256px;width:153px;height:18px;border:1px solid #7c7c7c;border-radius:4px;background:linear-gradient(#fff 0,#f2f2f2 50%,#e4e4e4 52%,#f4f4f4 100%);box-shadow:0 1px 1px rgba(0,0,0,.2)}
#wbstep{right:-1px;top:-1px;width:18px;height:18px;border:1px solid #3a50a0;border-radius:0 4px 4px 0;background:linear-gradient(#a8c8f4 0,#5a98ea 48%,#3f82e0 52%,#8cc0fa 100%)}
</style>
<div id="hist" class="abs"></div>
<div class="abs clip" style="left:1000px;border-left:none"></div>
<div class="abs clip" style="left:1261px;border-right:none"></div>
<svg class="abs" style="left:1000px;top:33px" width="279" height="112" viewBox="1000 33 279 112">
<path d="M1011.5 139.6 L1011.5 133.7 L1012.6 133.6 L1013.7 133.5 L1014.8 133.2 L1015.9 133.2 L1017.0 132.3 L1018.1 131.4 L1019.2 131.4 L1020.4 128.3 L1021.6 128.4 L1022.7 128.5 L1023.9 126.8 L1025.1 125.5 L1026.2 124.6 L1027.4 120.9 L1028.6 119.8 L1029.7 117.4 L1030.9 116.2 L1032.1 113.3 L1033.2 110.3 L1034.4 108.7 L1035.6 106.8 L1036.8 104.7 L1037.9 104.9 L1039.1 105.0 L1040.3 106.3 L1041.4 106.1 L1042.6 106.8 L1043.8 108.2 L1044.9 108.2 L1046.1 108.0 L1047.3 107.7 L1048.4 109.6 L1049.6 108.5 L1050.8 110.1 L1051.9 110.3 L1053.1 108.5 L1054.3 107.3 L1055.5 108.4 L1056.6 105.9 L1057.8 105.6 L1059.0 104.4 L1060.1 105.6 L1061.3 104.8 L1062.5 102.8 L1063.6 103.8 L1064.8 102.1 L1065.8 102.9 L1066.8 104.0 L1067.9 103.6 L1068.9 106.0 L1069.9 106.1 L1070.9 107.5 L1071.9 108.0 L1072.9 107.4 L1073.9 108.2 L1075.0 108.5 L1076.0 109.1 L1077.0 109.7 L1078.0 110.9 L1079.0 112.3 L1080.0 111.6 L1081.1 113.9 L1082.1 113.9 L1083.1 114.5 L1084.1 116.4 L1085.1 116.3 L1086.1 116.6 L1087.2 117.7 L1088.2 118.5 L1089.2 119.0 L1090.3 117.5 L1091.3 119.6 L1092.4 117.4 L1093.4 119.1 L1094.5 119.3 L1095.5 117.4 L1096.6 119.2 L1097.6 118.2 L1098.7 118.7 L1099.7 117.4 L1100.8 117.4 L1101.9 117.8 L1102.9 119.6 L1104.0 117.8 L1105.0 119.1 L1106.1 119.5 L1107.1 119.5 L1108.2 118.1 L1109.2 118.5 L1110.4 118.9 L1111.6 120.0 L1112.7 121.2 L1113.9 121.3 L1115.1 120.2 L1116.2 121.6 L1117.4 121.5 L1118.6 121.5 L1119.7 119.4 L1120.9 120.4 L1121.9 121.5 L1123.0 119.5 L1124.0 120.2 L1125.1 120.8 L1126.1 121.6 L1127.1 120.3 L1128.2 121.7 L1129.2 120.9 L1130.3 120.8 L1131.4 120.2 L1132.6 120.1 L1133.8 119.6 L1134.9 119.2 L1136.1 119.2 L1137.3 119.9 L1138.4 120.7 L1139.6 121.8 L1140.8 120.2 L1141.9 121.3 L1143.0 119.6 L1144.0 121.1 L1145.0 119.4 L1146.1 118.5 L1147.1 118.0 L1148.2 118.7 L1149.3 120.7 L1150.4 122.5 L1151.4 122.9 L1152.5 124.1 L1153.6 125.5 L1153.6 139.6 Z" fill="#f20010"/>
<path d="M1251.8 139.6 L1251.8 134.9 L1253.4 132.1 L1254.5 131.0 L1255.6 133.0 L1256.7 131.0 L1257.7 132.0 L1258.8 132.1 L1260.0 132.5 L1261.2 130.5 L1262.3 131.5 L1263.5 130.7 L1264.7 131.6 L1265.8 130.6 L1267.0 130.2 L1267.0 139.6 Z" fill="#f20010"/>
<path d="M1068.3 139.6 L1068.3 102.1 L1069.5 100.7 L1070.6 97.9 L1072.3 95.1 L1074.2 94.4 L1075.6 98.6 L1076.5 103.3 L1077.7 103.4 L1078.8 105.2 L1080.0 106.3 L1081.2 105.7 L1082.3 107.5 L1083.5 106.8 L1084.7 105.9 L1085.8 105.8 L1087.0 106.6 L1088.2 104.9 L1089.3 105.7 L1090.5 105.8 L1091.7 104.5 L1092.9 104.5 L1094.0 104.8 L1095.2 105.8 L1096.4 105.6 L1097.5 106.0 L1098.7 105.9 L1099.9 106.8 L1101.0 107.8 L1102.2 108.3 L1103.4 110.3 L1104.5 111.2 L1105.7 112.7 L1106.9 115.7 L1108.0 117.6 L1109.2 118.5 L1110.4 120.4 L1111.6 121.6 L1112.7 123.2 L1112.7 139.6 Z" fill="#22f010"/>
<path d="M1163.0 139.6 L1163.0 118.5 L1164.1 117.7 L1165.3 116.6 L1166.5 116.6 L1167.7 116.6 L1168.8 116.9 L1170.0 116.7 L1171.2 115.1 L1172.3 115.7 L1173.5 115.3 L1174.7 114.3 L1175.8 114.3 L1177.0 113.4 L1178.2 114.2 L1179.3 114.8 L1180.5 114.3 L1181.7 115.0 L1182.8 115.6 L1184.0 114.7 L1185.2 115.3 L1186.4 116.1 L1187.5 116.0 L1188.7 115.7 L1189.9 114.9 L1191.0 116.0 L1192.2 115.0 L1193.4 114.3 L1194.5 114.2 L1195.7 112.5 L1196.9 113.4 L1198.0 113.9 L1199.2 113.7 L1200.4 114.8 L1201.8 115.0 L1203.2 114.5 L1204.2 115.4 L1205.2 117.1 L1206.2 117.3 L1206.2 139.6 Z" fill="#22f010"/>
<path d="M1057.8 139.6 L1057.8 106.3 L1059.0 105.2 L1060.1 103.3 L1061.3 103.0 L1062.5 100.9 L1063.6 100.3 L1064.8 100.4 L1066.0 99.8 L1067.1 99.9 L1068.3 98.9 L1069.5 101.3 L1070.6 102.1 L1071.8 106.8 L1071.8 139.6 Z" fill="#1010e8"/>
<path d="M1201.5 139.6 L1201.5 117.3 L1202.7 115.8 L1203.9 115.8 L1205.1 113.8 L1206.2 114.1 L1207.4 113.0 L1208.6 112.0 L1209.7 112.3 L1210.9 111.4 L1212.1 109.6 L1213.2 108.8 L1214.4 108.0 L1215.6 106.6 L1216.7 107.6 L1217.9 107.3 L1219.1 105.6 L1220.2 105.0 L1221.4 104.9 L1222.6 104.4 L1223.8 103.3 L1225.2 102.9 L1226.6 101.4 L1228.0 100.7 L1229.6 103.3 L1230.8 103.3 L1231.9 105.5 L1233.1 105.6 L1234.3 106.1 L1235.4 106.6 L1236.6 106.3 L1237.8 106.8 L1238.9 107.3 L1240.1 107.8 L1241.3 107.7 L1242.5 107.5 L1243.6 108.6 L1244.8 107.5 L1246.0 109.2 L1247.1 108.9 L1248.3 110.3 L1249.5 112.5 L1250.6 115.0 L1252.3 120.8 L1253.4 127.9 L1253.7 134.9 L1253.7 139.6 Z" fill="#1010e8"/>
<path d="M1013.4 139.6 L1013.4 134.9 L1014.5 134.6 L1015.7 133.7 L1016.8 132.4 L1017.8 132.8 L1018.8 132.1 L1019.9 130.0 L1020.9 130.4 L1021.9 129.2 L1023.0 128.1 L1024.0 127.6 L1025.1 127.9 L1026.2 126.8 L1027.4 125.9 L1028.6 125.4 L1029.7 124.4 L1030.9 124.8 L1032.1 124.3 L1033.2 123.6 L1034.4 123.7 L1035.6 123.2 L1036.8 121.9 L1037.9 122.0 L1039.1 122.0 L1040.3 119.0 L1041.4 119.0 L1042.6 117.8 L1043.8 117.3 L1044.8 116.6 L1045.8 115.4 L1046.9 116.5 L1047.9 115.0 L1049.0 113.7 L1050.0 114.5 L1051.0 112.7 L1052.1 113.3 L1053.1 112.7 L1054.3 111.3 L1055.5 110.9 L1056.6 110.8 L1057.8 109.5 L1059.0 107.6 L1060.1 106.8 L1061.3 106.4 L1062.5 104.8 L1063.6 103.3 L1064.6 102.2 L1065.7 100.9 L1066.7 101.0 L1068.3 105.6 L1068.3 139.6 Z" fill="#f010f0"/>
<path d="M1116.2 139.6 L1116.2 124.3 L1117.4 124.7 L1118.6 124.8 L1119.7 125.9 L1120.9 125.0 L1122.1 126.0 L1123.2 125.0 L1124.4 124.3 L1125.6 125.4 L1126.7 124.3 L1127.9 123.6 L1129.1 124.2 L1130.3 125.5 L1130.3 139.6 Z" fill="#f010f0"/>
<path d="M1238.2 139.6 L1238.2 133.0 L1239.4 133.1 L1240.5 133.1 L1241.6 132.0 L1242.7 133.1 L1243.8 133.6 L1244.9 132.4 L1246.0 132.4 L1247.1 132.5 L1248.2 132.0 L1249.2 132.2 L1250.3 133.9 L1251.3 132.6 L1252.4 134.0 L1253.4 133.0 L1253.4 139.6 Z" fill="#f010f0"/>
<path d="M1066.0 139.6 L1066.0 102.1 L1067.1 102.5 L1068.3 101.0 L1069.5 103.5 L1070.6 105.6 L1071.8 107.4 L1073.0 110.3 L1074.2 113.4 L1075.3 114.2 L1076.5 116.2 L1077.7 116.9 L1078.8 117.6 L1080.0 119.0 L1081.2 120.6 L1082.3 119.9 L1083.5 120.4 L1084.7 119.6 L1085.8 119.9 L1087.0 119.7 L1088.2 118.4 L1089.3 119.2 L1090.5 118.5 L1091.7 117.8 L1092.9 117.3 L1094.0 119.8 L1095.2 123.2 L1095.2 139.6 Z" fill="#30f8f8"/>
<path d="M1199.2 139.6 L1199.2 118.5 L1200.4 118.5 L1201.5 118.0 L1202.7 116.6 L1203.9 115.4 L1205.1 116.5 L1206.2 115.8 L1207.4 117.3 L1208.6 116.2 L1209.7 117.2 L1210.9 116.2 L1212.1 116.6 L1213.2 116.7 L1214.4 117.8 L1215.6 119.1 L1216.7 117.7 L1217.9 118.6 L1219.1 118.5 L1220.2 118.4 L1221.4 118.8 L1222.6 118.7 L1223.8 118.5 L1224.9 119.7 L1226.1 118.8 L1227.3 120.9 L1228.4 120.8 L1229.6 121.0 L1230.8 122.1 L1231.9 122.2 L1233.1 123.2 L1234.5 124.5 L1235.9 126.7 L1237.8 131.4 L1239.2 134.9 L1239.2 139.6 Z" fill="#30f8f8"/>
<path d="M1090.5 139.6 L1090.5 118.5 L1091.7 117.6 L1092.9 116.6 L1094.0 115.6 L1095.2 114.4 L1096.4 113.8 L1097.5 114.0 L1098.7 113.3 L1099.9 112.7 L1101.0 112.0 L1102.2 112.9 L1103.4 113.8 L1104.5 114.9 L1105.7 117.1 L1106.9 117.3 L1108.3 120.0 L1109.7 120.8 L1110.9 122.7 L1112.0 124.3 L1113.9 127.9 L1113.9 139.6 Z" fill="#f4f410"/>
<path d="M1143.1 139.6 L1143.1 127.9 L1144.3 124.4 L1145.4 123.2 L1147.1 119.0 L1148.2 119.5 L1149.3 118.5 L1150.4 118.7 L1151.4 118.8 L1152.5 118.5 L1153.6 118.0 L1154.8 117.7 L1156.0 118.4 L1157.1 116.9 L1158.3 116.9 L1159.5 116.7 L1160.6 117.9 L1161.8 116.5 L1163.0 116.9 L1164.1 118.2 L1165.3 117.6 L1166.5 116.7 L1167.7 118.6 L1168.8 118.4 L1170.0 118.0 L1171.2 118.1 L1172.3 118.1 L1173.5 119.5 L1174.7 120.1 L1175.8 118.6 L1177.0 119.7 L1178.2 119.8 L1179.3 120.2 L1180.5 120.2 L1181.7 120.1 L1182.8 119.8 L1184.0 120.8 L1185.2 121.2 L1186.4 121.8 L1187.5 120.2 L1188.7 121.3 L1189.9 121.3 L1191.0 123.3 L1192.2 123.2 L1192.2 139.6 Z" fill="#f4f410"/>
<path d="M1011.5 139.6 L1011.5 137.2 L1012.6 137.7 L1013.7 137.3 L1014.8 135.7 L1015.9 137.1 L1017.1 137.6 L1018.2 137.5 L1019.3 136.6 L1020.4 136.0 L1021.6 134.6 L1022.7 136.1 L1023.9 134.2 L1025.1 134.8 L1026.2 135.1 L1027.4 133.7 L1028.6 133.6 L1029.7 131.7 L1030.9 131.5 L1032.1 131.4 L1033.2 130.8 L1034.4 127.4 L1035.6 126.7 L1036.8 125.8 L1037.9 124.1 L1039.1 123.2 L1040.3 121.7 L1041.4 122.1 L1042.6 120.0 L1043.8 119.5 L1044.9 119.7 L1046.1 118.7 L1047.3 117.3 L1048.4 116.5 L1049.6 117.0 L1050.8 116.2 L1051.9 116.0 L1053.1 115.6 L1054.3 113.2 L1055.5 113.2 L1056.6 112.7 L1057.8 111.4 L1059.0 111.3 L1060.1 110.3 L1061.3 109.0 L1062.5 108.7 L1063.6 106.3 L1064.8 105.1 L1066.0 104.5 L1067.1 104.8 L1068.3 107.3 L1069.5 109.8 L1070.6 111.5 L1072.0 112.8 L1073.5 115.7 L1074.5 116.9 L1075.5 117.6 L1076.5 118.5 L1077.7 119.9 L1078.8 119.6 L1080.0 120.2 L1081.2 119.8 L1082.3 121.0 L1083.5 121.3 L1084.7 120.7 L1085.8 121.7 L1087.0 121.1 L1088.2 120.1 L1089.3 120.3 L1090.5 120.8 L1091.7 121.0 L1092.9 122.3 L1094.0 121.5 L1095.2 122.7 L1096.4 123.6 L1097.5 123.9 L1098.7 123.0 L1099.9 124.3 L1101.0 125.3 L1102.2 124.5 L1103.4 126.0 L1104.5 125.1 L1105.7 126.2 L1106.9 126.0 L1108.0 125.0 L1109.2 126.0 L1110.4 124.7 L1111.6 124.3 L1112.7 124.3 L1113.9 125.8 L1115.1 125.5 L1116.2 125.1 L1117.4 126.9 L1118.6 127.3 L1119.7 125.7 L1120.9 125.8 L1122.1 127.6 L1123.2 126.4 L1124.4 126.8 L1125.6 125.6 L1126.7 125.3 L1127.9 127.2 L1129.1 126.4 L1130.3 126.0 L1131.4 126.9 L1132.6 125.5 L1133.8 126.7 L1134.9 126.3 L1136.1 126.1 L1137.3 126.9 L1138.4 126.7 L1139.6 127.5 L1140.8 127.0 L1141.9 127.3 L1143.1 126.8 L1144.3 127.9 L1145.4 129.2 L1146.6 129.4 L1147.8 129.7 L1149.0 130.6 L1150.1 129.9 L1151.3 130.2 L1152.5 131.0 L1153.6 130.2 L1154.8 130.3 L1156.0 130.2 L1157.1 130.6 L1158.3 130.0 L1159.5 129.6 L1160.6 128.7 L1161.8 128.4 L1163.0 128.6 L1164.1 128.1 L1165.3 129.0 L1166.5 129.7 L1167.7 128.6 L1168.8 129.0 L1170.0 127.1 L1171.2 128.0 L1172.3 127.9 L1173.5 128.5 L1174.7 127.5 L1175.8 126.8 L1177.0 126.7 L1178.2 126.1 L1179.3 124.7 L1180.5 124.3 L1181.7 123.8 L1182.8 124.1 L1184.0 123.3 L1185.2 122.7 L1186.4 123.3 L1187.5 121.1 L1188.7 121.3 L1189.9 120.5 L1191.0 120.4 L1192.2 120.0 L1193.4 120.1 L1194.5 120.4 L1195.7 119.6 L1196.9 120.0 L1198.0 118.9 L1199.2 120.8 L1200.4 119.7 L1201.5 119.4 L1202.7 120.8 L1203.9 120.3 L1205.1 119.9 L1206.2 120.6 L1207.4 120.5 L1208.6 120.8 L1209.7 123.3 L1210.9 123.6 L1212.5 126.7 L1214.4 131.4 L1216.3 133.2 L1217.3 132.4 L1218.4 133.8 L1219.5 132.9 L1220.5 133.9 L1221.6 134.1 L1222.7 132.8 L1223.8 133.7 L1224.9 132.8 L1226.1 132.2 L1227.3 132.5 L1228.4 131.9 L1229.6 132.5 L1230.8 132.5 L1231.9 133.7 L1233.1 132.4 L1234.3 132.3 L1235.4 132.8 L1236.6 132.4 L1237.8 133.0 L1238.9 137.2 L1240.0 137.7 L1241.0 137.7 L1242.1 136.4 L1243.1 136.6 L1244.1 137.6 L1245.2 138.2 L1246.2 137.5 L1247.3 137.0 L1248.3 138.3 L1249.3 136.0 L1250.4 136.2 L1251.4 137.9 L1252.5 137.0 L1253.5 136.1 L1254.5 137.3 L1255.6 138.3 L1256.6 137.2 L1257.6 136.9 L1258.7 136.3 L1259.7 136.2 L1260.8 138.1 L1261.8 137.2 L1262.8 138.2 L1263.9 136.2 L1264.9 136.6 L1266.0 136.2 L1267.0 137.2 L1267.0 139.6 Z" fill="#ffffff"/>
<rect x="1011" y="139" width="256.5" height="1.2" fill="#fff"/><rect x="1011" y="140.2" width="256.5" height="1" fill="#1a1a1a"/>
<rect x="1011" y="85" width="1.2" height="54" fill="#f20010"/><rect x="1266.2" y="48" width="1.3" height="91" fill="#f20010"/>
<path d="M1003.5 43.5 L1009 37 L1014.5 43.5 L1013.5 44.8 L1004.5 44.8 Z" fill="#ff0000"/><path d="M1263.5 43.5 L1269 37 L1274.5 43.5 L1273.5 44.8 L1264.5 44.8 Z" fill="#ff0000"/>
<path d="M1005 42.5 L1009 38 L1010.5 39.5 Q1008 41 1007 42.5 Z" fill="#ff9a9a" opacity=".8"/><path d="M1265 42.5 L1269 38 L1270.5 39.5 Q1268 41 1267 42.5 Z" fill="#ff9a9a" opacity=".8"/>
</svg>
<div id="info" class="abs"></div>


<div class="abs" style="left:1071px;top:150px;width:1px;height:42px;background:#8e8e8e"></div>




<div id="tabs" class="abs"></div>
<div id="tabline" class="abs"></div>
<div class="tab sel" style="left:1002px"></div>
<div class="tab" style="left:1026px"></div><div class="tab" style="left:1050px"></div><div class="tab" style="left:1074px"></div><div class="tab" style="left:1098px"></div><div class="tab" style="left:1122px"></div><div class="tab" style="left:1146px"></div><div class="tab" style="left:1170px"></div><div class="tab" style="left:1194px"></div><div class="tab" style="left:1218px"></div>
<div id="phead" class="abs"></div>
<div id="pbody" class="abs"></div>
<svg class="abs" style="left:1000px;top:198px" width="279" height="46" viewBox="1000 198 279 46">
<defs>
<linearGradient id="tri" x1="0" y1="0" x2="0" y2="1"><stop offset="0" stop-color="#8a8a8a"/><stop offset=".6" stop-color="#2a2a2a"/><stop offset="1" stop-color="#000"/></linearGradient>
<linearGradient id="lfade" x1="0" y1="0" x2="1" y2="0"><stop offset="0" stop-color="#333" stop-opacity=".25"/><stop offset=".4" stop-color="#333"/><stop offset="1" stop-color="#333" stop-opacity=".55"/></linearGradient>
<linearGradient id="st1" x1="0" y1="0" x2="0" y2="1"><stop offset="0" stop-color="#fff"/><stop offset="1" stop-color="#e4e4e4"/></linearGradient>
<linearGradient id="st2" x1="0" y1="0" x2="1" y2="1"><stop offset="0" stop-color="#3a3a3a"/><stop offset="1" stop-color="#c0c0c0"/></linearGradient>
<linearGradient id="lensg" x1="0" y1="0" x2="1" y2="0"><stop offset="0" stop-color="#9a9a9a"/><stop offset=".45" stop-color="#5a5a5a"/><stop offset="1" stop-color="#333"/></linearGradient>
<filter id="tb1" x="-30%" y="-30%" width="160%" height="160%"><feGaussianBlur stdDeviation=".45"/></filter>
</defs>
<!-- 1 aperture -->
<circle cx="1012.6" cy="212.2" r="6.6" fill="#fff" opacity=".7"/>
<circle cx="1012.6" cy="211.4" r="6.5" fill="#262626"/>
<g stroke="#f2f2f2" stroke-width="1.1" stroke-linecap="round">
<path d="M1012.2 205.4 L1014.6 210.2"/><path d="M1017.6 207.6 L1014.4 212"/><path d="M1018.6 213.6 L1013.2 213.4"/><path d="M1013.4 217.6 L1010.8 212.8"/><path d="M1007.6 215.2 L1010.8 210.8"/><path d="M1006.6 209.2 L1012 209.4"/>
</g>
<path d="M1012.6 209.4 L1014.4 211.4 L1012.6 213.4 L1010.8 211.4 Z" fill="#000"/>
<!-- 2 tone curve -->
<rect x="1029.5" y="205.5" width="15" height="12.7" fill="#cfcfcf"/><g stroke="#8c8c8c" stroke-width="1" fill="none"><path d="M1029.5 205.5 H1044.5 M1029.5 209.8 H1044.5 M1029.5 214 H1044.5 M1029.5 218.2 H1044.5 M1029.5 205.5 V218.2 M1034.5 205.5 V218.2 M1039.5 205.5 V218.2 M1044.5 205.5 V218.2"/></g>
<path d="M1029.4 219.2 Q1034 219 1036.6 212 Q1039.4 205.4 1045 205.6" stroke="#111" stroke-width="1.5" fill="none"/>
<!-- 3 triangles -->
<path d="M1062.6 213 L1065.6 205 L1068.4 213 Z" fill="#555" filter="url(#tb1)"/>
<path d="M1052.8 218.6 L1059.4 205.8 L1064.6 218.6 Z" fill="url(#tri)"/>
<!-- 4 lines -->
<g stroke="url(#lfade)" stroke-width="1.2"><path d="M1078 205.6 H1092.4 M1078 208.2 H1092.4"/><path d="M1078 210.8 H1092.4 M1078 213.4 H1092.4 M1078 216 H1092.4"/></g>
<g stroke="#444" stroke-width="1.1" opacity=".85"><path d="M1081 205.6 H1092 M1079 208.2 H1092 M1079 210.8 H1092 M1079 213.4 H1092 M1081 216 H1092"/></g>
<!-- 5 split toning -->
<rect x="1102.4" y="204.8" width="13.2" height="5" fill="url(#st1)" stroke="#222" stroke-width=".9"/>
<rect x="1102.4" y="212.8" width="13.2" height="5" fill="url(#st2)" stroke="#222" stroke-width=".9"/>
<!-- 6 lens -->
<g filter="url(#tb1)">
<path d="M1125 204.6 H1131.6 Q1127.2 211.5 1131.6 218.4 H1125 Z" fill="url(#lensg)"/>
<path d="M1141 204.6 H1133.6 Q1138 211.5 1133.6 218.4 H1141 Z" fill="#3c3c3c"/>
<path d="M1136.4 205 V218 M1139 205 V218" stroke="#6a6a6a" stroke-width=".7"/>
</g>
<!-- 7 fx -->
<g fill="none" stroke="#1c1c1c" stroke-linecap="round"><path d="M1158.3 205.8 Q1156.8 204.5 1155.7 206 Q1154.9 207.4 1154.5 209.8 L1153.1 215.2 Q1152.4 217.5 1150.3 216.7" stroke-width="1.35"/><path d="M1152 209.3 H1157" stroke-width="1.1"/><path d="M1157.3 209.2 Q1158.7 208.4 1159.7 211.2 Q1160.7 214.4 1162.9 213.3" stroke-width="1.5"/><path d="M1163.3 208.7 Q1160.2 209.4 1159.7 211.2 Q1158.9 213.6 1156.5 213.8" stroke-width="1.5"/></g>
<!-- 8 camera -->
<path d="M1174.6 207.6 H1177.6 L1178.6 205.8 H1184 L1185 207.6 H1187.6 Q1188.2 207.6 1188.2 208.4 V217 Q1188.2 217.8 1187.4 217.8 H1175.2 Q1174.4 217.8 1174.4 217 V208.4 Q1174.4 207.6 1174.6 207.6 Z" fill="#1c1c1c"/>
<path d="M1179 204.6 H1180.4 V206 H1179 Z M1182.2 204.6 H1183.6 V206 H1182.2 Z" fill="#1c1c1c"/>
<circle cx="1182.2" cy="213.4" r="3.4" fill="#000" stroke="#555" stroke-width=".6"/><circle cx="1182.6" cy="214.2" r="1.1" fill="#e8e0f0"/>
<!-- 9 sliders -->
<g stroke="#2a2a2a" stroke-width="1.1"><path d="M1197.6 206.4 H1212.4 M1197.6 211.6 H1212.4 M1197.6 216.8 H1212.4"/></g>
<g fill="#f4f4f4" stroke="#333" stroke-width=".8"><rect x="1204.8" y="204.6" width="2.8" height="3.8" rx=".8"/><rect x="1208.6" y="209.8" width="2.8" height="3.8" rx=".8"/><rect x="1201.6" y="215" width="2.8" height="3.8" rx=".8"/></g>
<!-- 10 stack -->
<g fill="#c4c4c4" stroke="#3a3a3a" stroke-width="1"><rect x="1225.6" y="208.6" width="10.6" height="10"/><rect x="1223.8" y="206.6" width="10.6" height="10"/><rect x="1222" y="204.6" width="10.6" height="10" fill="#cdcdcd"/></g>
<!-- flyout -->
<g stroke="#222" stroke-width="1"><path d="M1265.4 230.5 H1270.4 M1265.4 232.7 H1270.4 M1265.4 234.9 H1270.4"/></g>
<rect x="1263" y="230" width="1.2" height="1" fill="#222"/><rect x="1263" y="232.2" width="1.2" height="1" fill="#222"/><rect x="1263" y="234.4" width="1.2" height="1" fill="#222"/>
<path d="M1275.2 232.6 V235.4 H1272.4 Z" fill="#222"/>
</svg>

<svg width="0" height="0" style="position:absolute"><defs><linearGradient id="tg" x1="0" y1="0" x2="0" y2="1"><stop offset="0" stop-color="#f0f0f0"/><stop offset=".5" stop-color="#c8c8c8"/><stop offset="1" stop-color="#8e8e8e"/></linearGradient></defs></svg>
<div class="val" style="top:284px"></div>
<div class="trk" style="top:306px;background:linear-gradient(90deg,#1010e0 0,#4a4ab8 30%,#8c8c7c 55%,#d0d030 82%,#f6f600 100%)"></div>
<svg class="th" style="left:1251.6px;top:302px;width:13.4px;height:12.3px" width="13.4" height="12.3" viewBox="0 0 11 12" preserveAspectRatio="none"><path d="M5.5 .8 L10.2 5.8 L10.2 8.6 Q10.2 10.6 8 10.6 L3 10.6 Q.8 10.6 .8 8.6 L.8 5.8 Z" fill="url(#tg)" stroke="#4e4e4e" stroke-width=".9"/></svg>
<div class="val" style="top:317px"></div>
<div class="trk" style="top:339px;background:linear-gradient(90deg,#10e010 0,#58b058 30%,#908890 55%,#d040d0 82%,#f808f8 100%)"></div>
<svg class="th" style="left:1235.1px;top:335px;width:13.4px;height:12.3px" width="13.4" height="12.3" viewBox="0 0 11 12" preserveAspectRatio="none"><path d="M5.5 .8 L10.2 5.8 L10.2 8.6 Q10.2 10.6 8 10.6 L3 10.6 Q.8 10.6 .8 8.6 L.8 5.8 Z" fill="url(#tg)" stroke="#4e4e4e" stroke-width=".9"/></svg>
<div class="val" style="top:381px"></div>
<div class="trk" style="top:403px;background:linear-gradient(90deg,#000,#fff)"></div>
<svg class="th" style="left:1131.7px;top:399px;width:13.4px;height:12.3px" width="13.4" height="12.3" viewBox="0 0 11 12" preserveAspectRatio="none"><path d="M5.5 .8 L10.2 5.8 L10.2 8.6 Q10.2 10.6 8 10.6 L3 10.6 Q.8 10.6 .8 8.6 L.8 5.8 Z" fill="url(#tg)" stroke="#4e4e4e" stroke-width=".9"/></svg>
<div class="val" style="top:414px"></div>
<div class="trk" style="top:436px;background:linear-gradient(90deg,#fff,#000)"></div>
<svg class="th" style="left:1095.5px;top:432px;width:13.4px;height:12.3px" width="13.4" height="12.3" viewBox="0 0 11 12" preserveAspectRatio="none"><path d="M5.5 .8 L10.2 5.8 L10.2 8.6 Q10.2 10.6 8 10.6 L3 10.6 Q.8 10.6 .8 8.6 L.8 5.8 Z" fill="url(#tg)" stroke="#4e4e4e" stroke-width=".9"/></svg>
<div class="val" style="top:447px"></div>
<div class="trk" style="top:469px;background:linear-gradient(90deg,#000,#fff)"></div>
<svg class="th" style="left:1011.5px;top:465px;width:13.4px;height:12.3px" width="13.4" height="12.3" viewBox="0 0 11 12" preserveAspectRatio="none"><path d="M5.5 .8 L10.2 5.8 L10.2 8.6 Q10.2 10.6 8 10.6 L3 10.6 Q.8 10.6 .8 8.6 L.8 5.8 Z" fill="url(#tg)" stroke="#4e4e4e" stroke-width=".9"/></svg>
<div class="val" style="top:480px"></div>
<div class="trk" style="top:502px;background:linear-gradient(90deg,#fff,#000)"></div>
<svg class="th" style="left:1042.8px;top:498px;width:13.4px;height:12.3px" width="13.4" height="12.3" viewBox="0 0 11 12" preserveAspectRatio="none"><path d="M5.5 .8 L10.2 5.8 L10.2 8.6 Q10.2 10.6 8 10.6 L3 10.6 Q.8 10.6 .8 8.6 L.8 5.8 Z" fill="url(#tg)" stroke="#4e4e4e" stroke-width=".9"/></svg>
<div class="val" style="top:513px"></div>
<div class="trk" style="top:535px;background:linear-gradient(90deg,#000,#fff)"></div>
<svg class="th" style="left:1163.6px;top:531px;width:13.4px;height:12.3px" width="13.4" height="12.3" viewBox="0 0 11 12" preserveAspectRatio="none"><path d="M5.5 .8 L10.2 5.8 L10.2 8.6 Q10.2 10.6 8 10.6 L3 10.6 Q.8 10.6 .8 8.6 L.8 5.8 Z" fill="url(#tg)" stroke="#4e4e4e" stroke-width=".9"/></svg>
<div class="val" style="top:546px"></div>
<div class="trk" style="top:568px;background:linear-gradient(90deg,#7a7a7a 0,#7a7a7a 38%,#5a5a5a 48%,#4a4a4a 52%,#f8f8f8 60%,#f8f8f8 62%,#3a3a3a 70%,#f8f8f8 77%,#f8f8f8 79%,#2a2a2a 85%,#f8f8f8 91%,#f8f8f8 94%,#000 99%)"></div>
<svg class="th" style="left:1155.8px;top:564px;width:13.4px;height:12.3px" width="13.4" height="12.3" viewBox="0 0 11 12" preserveAspectRatio="none"><path d="M5.5 .8 L10.2 5.8 L10.2 8.6 Q10.2 10.6 8 10.6 L3 10.6 Q.8 10.6 .8 8.6 L.8 5.8 Z" fill="url(#tg)" stroke="#4e4e4e" stroke-width=".9"/></svg>
<div class="val" style="top:594px"></div>
<div class="trk" style="top:616px;background:linear-gradient(90deg,#7a7a7a 0,#7a7a7a 38%,#5a5a5a 48%,#4a4a4a 52%,#f8f8f8 60%,#f8f8f8 62%,#3a3a3a 70%,#f8f8f8 77%,#f8f8f8 79%,#2a2a2a 85%,#f8f8f8 91%,#f8f8f8 94%,#000 99%)"></div>
<svg class="th" style="left:1131.7px;top:612px;width:13.4px;height:12.3px" width="13.4" height="12.3" viewBox="0 0 11 12" preserveAspectRatio="none"><path d="M5.5 .8 L10.2 5.8 L10.2 8.6 Q10.2 10.6 8 10.6 L3 10.6 Q.8 10.6 .8 8.6 L.8 5.8 Z" fill="url(#tg)" stroke="#4e4e4e" stroke-width=".9"/></svg>
<div class="val" style="top:627px"></div>
<div class="trk" style="top:649px;background:linear-gradient(90deg,#7c7c7c 0,#7c7c7c 30%,#80788a 45%,#8a5aa8 54%,#d82828 64%,#e0d820 72%,#28d028 79%,#20d0e0 86%,#2828e0 92%,#e010c0 97%,#f01040 100%)"></div>
<svg class="th" style="left:1136.6px;top:645px;width:13.4px;height:12.3px" width="13.4" height="12.3" viewBox="0 0 11 12" preserveAspectRatio="none"><path d="M5.5 .8 L10.2 5.8 L10.2 8.6 Q10.2 10.6 8 10.6 L3 10.6 Q.8 10.6 .8 8.6 L.8 5.8 Z" fill="url(#tg)" stroke="#4e4e4e" stroke-width=".9"/></svg>
<div class="val" style="top:660px"></div>
<div class="trk" style="top:682px;background:linear-gradient(90deg,#7c7c7c 0,#7c7c7c 30%,#80788a 45%,#8a5aa8 54%,#d82828 64%,#e0d820 72%,#28d028 79%,#20d0e0 86%,#2828e0 92%,#e010c0 97%,#f01040 100%)"></div>
<svg class="th" style="left:1150.3px;top:678px;width:13.4px;height:12.3px" width="13.4" height="12.3" viewBox="0 0 11 12" preserveAspectRatio="none"><path d="M5.5 .8 L10.2 5.8 L10.2 8.6 Q10.2 10.6 8 10.6 L3 10.6 Q.8 10.6 .8 8.6 L.8 5.8 Z" fill="url(#tg)" stroke="#4e4e4e" stroke-width=".9"/></svg>
<div class="sep" style="top:357px"></div><div class="sep" style="top:585px"></div>
<div class="abs" id="wbsel"><div class="abs" id="wbstep"><svg width="16" height="16" viewBox="0 0 16 16" style="position:absolute;left:0;top:0"><path d="M8 2.5 L10.8 6.5 L5.2 6.5 Z M8 13.5 L10.8 9.5 L5.2 9.5 Z" fill="#111"/></svg></div></div>

<style>
.btn{position:absolute;top:921px;height:21px;border:1px solid #5c5c5c;border-radius:11px;background:linear-gradient(#fdfdfd 0,#f2f2f2 45%,#e4e4e4 52%,#f0f0f0 80%,#fbfbfb 100%);font-size:13px;line-height:18px;text-align:center;box-shadow:0 1px 1px rgba(0,0,0,.25);white-space:pre}
.btn.def{border-color:#2a3f8c;background:linear-gradient(#c4dcf8 0,#86b6f0 45%,#5f9eea 52%,#86c0f8 80%,#b8e0ff 100%)}
#link{left:457px;top:926px;font-size:11px;line-height:14px;color:#1a1aa0;text-decoration:underline;white-space:pre}
#fname{left:413px;top:886px;font-size:11px;line-height:14px;white-space:pre}
#zoomgrp{left:15px;top:884px;width:40px;height:16px;border-radius:4px;background:#a2a2a2}
.zb{position:absolute;top:886px;width:10px;height:10px;border:1px solid #7a7a7a;border-radius:2px;background:linear-gradient(#fff,#ececec);box-shadow:0 1px 1px rgba(0,0,0,.35)}
#zfield{left:52px;top:883px;width:56px;height:17px;background:#fff;border-top:1px solid #777;font-size:11px;line-height:16px;text-align:center}
#zstep{left:108px;top:883px;width:17px;height:17px;border:1px solid #3a50a0;border-left:none;border-radius:0 4px 4px 0;background:linear-gradient(#a8c8f4 0,#5a98ea 48%,#3f82e0 52%,#8cc0fa 100%)}
#pvtxt{left:913px;top:42px;font-size:11px;line-height:14px}
#pvbox{left:896px;top:42px;width:12px;height:12px;border:1px solid #5a6a9a;border-radius:2px;background:linear-gradient(#e8f0fc,#a8c8f0 60%,#c8e0fc)}
</style>
<div class="btn" style="left:25px;width:100px"></div>
<div class="btn def" style="left:978px;width:95px"></div>
<div class="btn" style="left:1100px;width:68px"></div>
<div class="btn" style="left:1195px;width:68px"></div>
<div id="zoomgrp" class="abs"></div>
<div class="zb" style="left:19px"></div><div class="zb" style="left:36px"></div>
<svg class="abs" style="left:19px;top:886px" width="30" height="10" viewBox="0 0 30 10"><path d="M2.5 5 H7.5 M19.5 5 H24.5 M22 2.5 V7.5" stroke="#0a0a0a" stroke-width="1.3" fill="none"/></svg>
<div id="zfield" class="abs"></div>
<div id="zstep" class="abs"><svg width="16" height="16" viewBox="0 0 16 16" style="position:absolute;left:0;top:0"><path d="M8 2.5 L10.6 6.5 L5.4 6.5 Z M8 13.5 L10.6 9.5 L5.4 9.5 Z" fill="#111"/></svg></div>
<div id="pvbox" class="abs"></div>
<svg class="abs" style="left:895px;top:38px" width="16" height="16" viewBox="0 0 16 16"><path d="M3.5 8.5 L6.5 12.5 L12.5 2.5" stroke="#111" stroke-width="2" fill="none" stroke-linecap="round" stroke-linejoin="round"/></svg>
<svg class="abs" style="left:1272px;top:945px" width="16" height="16" viewBox="0 0 16 16"><path d="M2 15 L15 2 M6 15 L15 6 M10 15 L15 10" stroke="#8a8a8a" stroke-width="1"/><path d="M3 15 L15 3 M7 15 L15 7 M11 15 L15 11" stroke="#fff" stroke-width="1"/></svg>

<div id="frame" class="abs"></div>
<span id="t_title" class="t" style="left:543.0px;top:4.1px;font-size:13px;line-height:15px;transform:scaleX(1.0793);">Camera Raw 6.0  –  Nikon D300</span>
<span id="t_prev" class="t" style="left:913.5px;top:42.9px;font-size:11px;line-height:13px;transform:scaleX(0.9994);">Preview</span>
<span id="t_fname" class="t" style="left:413.0px;top:886.2px;font-size:11px;line-height:13px;transform:scaleX(1.0473);">Nikon D300  –  _DSC5126.NEF</span>
<span id="t_link" class="t" style="left:457.0px;top:926.9px;font-size:11px;line-height:13px;transform:scaleX(1.0926);color:#1a1aa8;text-decoration:underline">Adobe RGB (1998); 8 bit; 4288 by 2848 (12,2MP); 240 ppi</span>
<span id="t_save" class="t" style="left:33.6px;top:924.1px;font-size:13px;line-height:15px;transform:scaleX(1.0272);">Save Image...</span>
<span id="t_open" class="t" style="left:987.0px;top:924.1px;font-size:13px;line-height:15px;transform:scaleX(1.0553);">Open Image</span>
<span id="t_cancel" class="t" style="left:1113.5px;top:924.1px;font-size:13px;line-height:15px;transform:scaleX(1.0131);">Cancel</span>
<span id="t_done" class="t" style="left:1213.0px;top:924.1px;font-size:13px;line-height:15px;transform:scaleX(1.0200);">Done</span>
<span id="t_wb" class="t" style="left:1018.5px;top:259.9px;font-size:11px;line-height:13px;transform:scaleX(1.0435);">White Balance:</span>
<span id="t_custom" class="t" style="left:1112.0px;top:259.2px;font-size:11px;line-height:13px;transform:scaleX(1.0684);">Custom</span>
<span id="t_temp" class="t" style="left:1019.2px;top:287.3px;font-size:11px;line-height:13px;transform:scaleX(1.0977);">Temperature</span>
<span id="t_tint" class="t" style="left:1019.2px;top:320.2px;font-size:11px;line-height:13px;transform:scaleX(1.1373);">Tint</span>
<span id="t_exp" class="t" style="left:1019.2px;top:384.3px;font-size:11px;line-height:13px;transform:scaleX(1.0455);">Exposure</span>
<span id="t_rec" class="t" style="left:1019.2px;top:417.2px;font-size:11px;line-height:13px;transform:scaleX(1.0114);">Recovery</span>
<span id="t_fill" class="t" style="left:1019.2px;top:450.1px;font-size:11px;line-height:13px;transform:scaleX(1.1082);">Fill Light</span>
<span id="t_blk" class="t" style="left:1019.2px;top:483.2px;font-size:11px;line-height:13px;transform:scaleX(0.9998);">Blacks</span>
<span id="t_bri" class="t" style="left:1019.2px;top:516.1px;font-size:11px;line-height:13px;transform:scaleX(1.0638);">Brightness</span>
<span id="t_con" class="t" style="left:1019.2px;top:549.2px;font-size:11px;line-height:13px;transform:scaleX(1.0775);">Contrast</span>
<span id="t_cla" class="t" style="left:1019.2px;top:597.1px;font-size:11px;line-height:13px;transform:scaleX(1.0843);">Clarity</span>
<span id="t_vib" class="t" style="left:1019.2px;top:630.2px;font-size:11px;line-height:13px;transform:scaleX(1.0644);">Vibrance</span>
<span id="t_sat" class="t" style="left:1019.2px;top:663.3px;font-size:11px;line-height:13px;transform:scaleX(1.0726);">Saturation</span>
<span id="v_temp" class="t" style="left:1220.2px;top:287.9px;font-size:11px;line-height:13px;transform:scaleX(1.1244);">50000</span>
<span id="v_tint" class="t" style="left:1220.2px;top:320.9px;font-size:11px;line-height:13px;transform:scaleX(1.1622);">+123</span>
<span id="v_exp" class="t" style="left:1220.2px;top:384.9px;font-size:11px;line-height:13px;transform:scaleX(1.0923);">0,00</span>
<span id="v_rec" class="t" style="left:1220.2px;top:417.9px;font-size:11px;line-height:13px;transform:scaleX(1.0449);">35</span>
<span id="v_fill" class="t" style="left:1220.2px;top:450.9px;font-size:11px;line-height:13px;transform:scaleX(1.0449);">0</span>
<span id="v_blk" class="t" style="left:1220.2px;top:483.9px;font-size:11px;line-height:13px;transform:scaleX(1.0449);">13</span>
<span id="v_bri" class="t" style="left:1220.2px;top:516.9px;font-size:11px;line-height:13px;transform:scaleX(1.1943);">+40</span>
<span id="v_con" class="t" style="left:1220.2px;top:549.9px;font-size:11px;line-height:13px;transform:scaleX(1.1943);">+40</span>
<span id="v_cla" class="t" style="left:1220.2px;top:597.9px;font-size:11px;line-height:13px;transform:scaleX(1.0449);">0</span>
<span id="v_vib" class="t" style="left:1220.2px;top:630.9px;font-size:11px;line-height:13px;transform:scaleX(1.2433);">+4</span>
<span id="v_sat" class="t" style="left:1220.2px;top:663.9px;font-size:11px;line-height:13px;transform:scaleX(1.1943);">+16</span>
<span id="t_auto" class="t" style="left:1095.0px;top:366.3px;font-size:11px;line-height:13px;transform:scaleX(1.1042);color:#868686;text-decoration:underline">Auto</span>
<span id="t_def" class="t" style="left:1143.0px;top:366.3px;font-size:11px;line-height:13px;transform:scaleX(1.0901);color:#1a1aa8;text-decoration:underline">Default</span>
<span id="t_basic" class="t" style="left:1116.2px;top:227.2px;font-size:11px;line-height:13px;transform:scaleX(0.9738);">Basic</span>
<span id="t_zoom" class="t" style="left:66.0px;top:886.2px;font-size:11px;line-height:13px;transform:scaleX(0.9595);">100%</span>
<span id="i_r" class="t" style="left:1017.0px;top:151.4px;font-size:11px;line-height:13px;transform:scaleX(0.9091);">R:</span>
<span id="i_g" class="t" style="left:1016.0px;top:165.4px;font-size:11px;line-height:13px;transform:scaleX(0.9462);">G:</span>
<span id="i_b" class="t" style="left:1018.0px;top:179.4px;font-size:11px;line-height:13px;transform:scaleX(0.8649);">B:</span>
<span id="i_rv" class="t" style="left:1049.5px;top:151.4px;font-size:11px;line-height:13px;transform:scaleX(1.0612);">8</span>
<span id="i_gv" class="t" style="left:1042.5px;top:165.4px;font-size:11px;line-height:13px;transform:scaleX(1.1020);">26</span>
<span id="i_bv" class="t" style="left:1042.5px;top:179.4px;font-size:11px;line-height:13px;transform:scaleX(1.1020);">37</span>
<span id="i_f" class="t" style="left:1127.5px;top:154.9px;font-size:11.5px;line-height:13.5px;transform:scaleX(1.2581);">f/9</span>
<span id="i_sh" class="t" style="left:1157.0px;top:154.9px;font-size:11.5px;line-height:13.5px;transform:scaleX(1.0853);">1/80 s</span>
<span id="i_iso" class="t" style="left:1102.0px;top:174.9px;font-size:11.5px;line-height:13.5px;transform:scaleX(0.9857);">ISO 400</span>
<span id="i_len" class="t" style="left:1157.0px;top:174.9px;font-size:11.5px;line-height:13.5px;transform:scaleX(1.0151);">10–17@10 mm</span>
</div>
</body>
</html>
